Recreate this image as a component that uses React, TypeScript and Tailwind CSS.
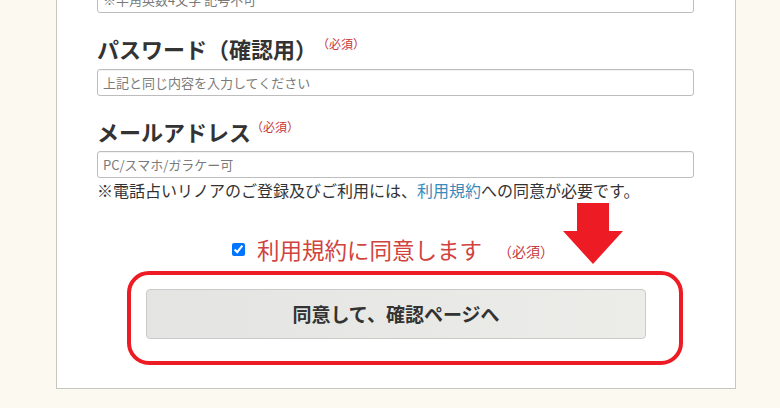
import React from "react";

const jp = { fontFamily: '"Noto Sans CJK JP", "Noto Sans", sans-serif' };

function Required({ className = "" }: { className?: string }) {
  return (
    <span className={"inline-block align-top text-[12px] font-normal leading-[14px] text-[#c9363b] " + className}>
      （必須）
    </span>
  );
}

function Field({ placeholder }: { placeholder: string }) {
  return (
    <input
      type="text"
      placeholder={placeholder}
      className="block h-[27px] w-[597px] rounded-[3px] border border-[#bdbdbd] bg-white px-[5px] text-[13px] text-[#333] shadow-[inset_0_1px_1px_rgba(0,0,0,0.05)] outline-none placeholder:text-[#7a7a7a]"
    />
  );
}

export default function App() {
  return (
    <div className="relative h-[408px] w-[780px] overflow-hidden bg-[#fcf9f1]" style={jp}>
      <div className="ml-[56px] -mt-[15px] w-[680px] border border-[#c9c6c0] bg-white pb-[49px]">
        <div className="px-[40px]">
          <Field placeholder="※半角英数4文字 記号不可" />

          <h3 className="mt-[19px] text-[22px] font-bold leading-[33px] text-[#333]">
            パスワード（確認用）<Required className="pt-[5px]" />
          </h3>
          <div className="mt-[4px]">
            <Field placeholder="上記と同じ内容を入力してください" />
          </div>

          <h3 className="mt-[19px] text-[22px] font-bold leading-[33px] text-[#333]">
            メールアドレス<Required className="pt-[5px]" />
          </h3>
          <div className="mt-[3px]">
            <Field placeholder="PC/スマホ/ガラケー可" />
          </div>
          <p className="text-[16px] leading-[24px] text-[#333]">
            ※電話占いリノアのご登録及びご利用には、<a className="text-[#3a8bbb]">利用規約</a>への同意が必要です。
          </p>
        </div>

        <label className="mt-[31px] flex items-center justify-center gap-[12px] pr-[6px]">
          <input type="checkbox" defaultChecked className="h-[13px] w-[13px] accent-[#0075ff]" />
          <span className="text-[22.5px] leading-[33px] text-[#d0433e]">利用規約に同意します</span>
          <span className="ml-[4px] mt-[4px] text-[14px] text-[#c9363b]">（必須）</span>
        </label>

        <div className="mt-[23px] flex justify-center">
          <button className="h-[50px] w-[500px] rounded-[4px] border border-[#cacaca] bg-gradient-to-r from-[#e4e5e2] to-[#ecece9] text-[19px] font-bold text-[#333]">
            同意して、確認ページへ
          </button>
        </div>
      </div>

      {/* annotation overlay */}
      <div className="absolute left-[127px] top-[271px] h-[94px] w-[556px] rounded-[22px] border-[4px] border-[#ed1c24]" />
      <svg className="absolute left-[563px] top-[203px]" width="60" height="61" viewBox="0 0 60 61">
        <path d="M14 0H46V28H60L30 61L0 28H14Z" fill="#ed1c24" />
      </svg>
    </div>
  );
}
